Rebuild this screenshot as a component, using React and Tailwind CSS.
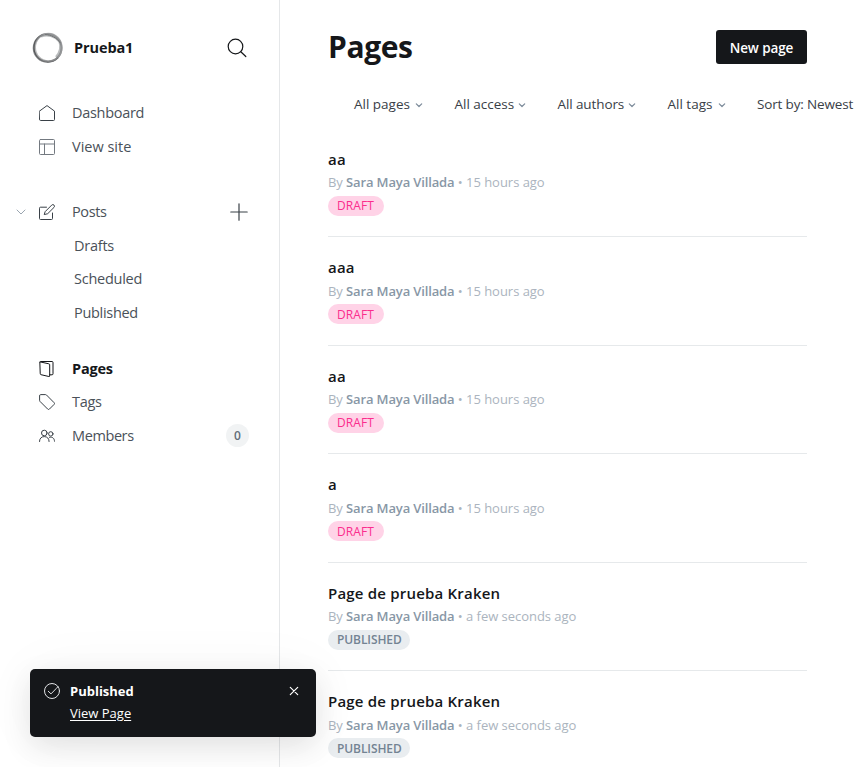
import React from 'react';

const stroke = { fill: 'none', stroke: 'currentColor', strokeLinecap: 'round', strokeLinejoin: 'round' };

function Icon({ size = 16, box = 16, width = 1, className = '', children }) {
  return (
    <svg width={size} height={size} viewBox={`0 0 ${box} ${box}`} {...stroke} strokeWidth={width} className={`shrink-0 ${className}`}>
      {children}
    </svg>
  );
}

const icons = {
  home: <path d="M.5 6.1 8 .6l7.500 5.500v8.400a1 1 0 0 1-1 1h-13a1 1 0 0 1-1-1z" />,
  site: (
    <g stroke="#737980">
      <rect x=".5" y=".5" width="15" height="15" rx="1" />
      <path d="M.5 5h15M5.500 5v10.500" />
    </g>
  ),
  edit: (
    <>
      <path d="M7.500 3.200H1.500a1 1 0 0 0-1 1v10.300a1 1 0 0 0 1 1h11a1 1 0 0 0 1-1V9" />
      <path d="m6.400 7.400 6.300-6.300a1.600 1.600 0 0 1 2.300 2.300L8.700 9.700l-3.100.8z" />
    </>
  ),
  pages: (
    <>
      <path d="M1.200.9 9.800 2.800a1 1 0 0 1 .9 1V15a.6.6 0 0 1-.8.5L2 13.700a1 1 0 0 1-.8-1z" />
      <path d="M1.200.9Q1.400.5 2 .5h11a1 1 0 0 1 1 1v11.300a1 1 0 0 1-1 1h-2.300" />
    </>
  ),
  tag: <path d="M.6 1.600a1 1 0 0 1 1-1h5a1.200 1.200 0 0 1 .8.3l7.700 7.800a1.200 1.200 0 0 1 0 1.700l-4.700 4.700a1.200 1.200 0 0 1-1.700 0L.9 7.300a1.200 1.200 0 0 1-.3-.8z" />,
  members: (
    <>
      <circle cx="5.300" cy="5" r="2.800" />
      <path d="M.5 13.500c0-3 1.800-4.900 4.800-4.900s4.800 1.900 4.800 4.900" />
      <circle cx="11.800" cy="5.900" r="2.200" />
      <path d="M10.500 9.300c2.900-.8 5 1 5 3.900" />
    </>
  ),
};

function NavItem({ icon, label, labelClass = '', active, chevron, children }) {
  return (
    <li className={`flex h-[33.5px] items-center ${active ? 'font-bold text-[#15171a]' : 'text-[#394047]'}`}>
      <span className="flex w-[39px] justify-center pr-[2px] pl-[5px] text-[#9aa5b0]">
        {chevron && (
          <Icon size={10} box={10}>
            <path d="m1 3 4 4 4-4" />
          </Icon>
        )}
      </span>
      <Icon>{icons[icon]}</Icon>
      <span className={`ml-[17px] ${labelClass}`}>{label}</span>
      {children}
    </li>
  );
}

function SubItem({ label, className }) {
  return (
    <li className="flex h-[33.5px] items-center pl-[74px] text-[#4a5159]">
      <span className={className}>{label}</span>
    </li>
  );
}

function Logo() {
  return (
    <svg width="32" height="32" viewBox="0 0 32 32" fill="none" className="ml-[32px] shrink-0">
      <circle cx="15.600" cy="16" r="13.900" stroke="#858789" strokeWidth="2" />
      <path d="M11 2.800C4 5.500 1 12 2.600 19.500 4.500 26 10 29.600 16.500 29.500c4 0 7-1.500 9.500-4" stroke="#505254" strokeWidth="1.400" />
      <ellipse cx="16.500" cy="15.400" rx="13.300" ry="13.800" stroke="#9b9d9e" strokeWidth="1.600" opacity=".7" />
      <path d="M9 4.500C15 1.500 23.500 4 27.500 9.500c2 4.500 1 11-3.500 15.500" stroke="#8b8d8f" strokeWidth="2.400" opacity=".6" />
      <path d="M13 2.600c6 .2 12 3.200 15.500 8.600" stroke="#6f7173" strokeWidth="1" />
    </svg>
  );
}

function Sidebar() {
  return (
    <nav className="flex w-[280px] shrink-0 flex-col border-r border-[#e5e7e9] text-[14.5px] leading-5">
      <header className="mt-[32px] flex h-[32px] items-center">
        <Logo />
        <span className="ml-[10px] font-bold tracking-[-0.1px] text-[#15171a]">Prueba1</span>
        <Icon size={20} box={20} width={1.200} className="mr-[32px] ml-auto text-[#15171a]">
          <circle cx="8.500" cy="8.500" r="7.300" />
          <path d="m13.800 13.800 5 4.700" />
        </Icon>
      </header>
      <ul className="mt-[32.3px]">
        <NavItem icon="home" label="Dashboard" labelClass="tracking-[-0.3px] text-[#4a5159]" />
        <NavItem icon="site" label="View site" labelClass="text-[#4a5159]" />
      </ul>
      <ul className="mt-[32px]">
        <NavItem icon="edit" label="Posts" labelClass="tracking-[-0.4px] text-[#4a5159]" chevron>
          <Icon size={18} box={18} width={1.200} className="mr-[31px] ml-auto">
            <path d="M9 .8v16.400M.8 9h16.400" />
          </Icon>
        </NavItem>
        <SubItem label="Drafts" className="tracking-[-0.25px]" />
        <SubItem label="Scheduled" className="tracking-[-0.25px]" />
        <SubItem label="Published" className="tracking-[-0.3px]" />
      </ul>
      <ul className="mt-[22.500px]">
        <NavItem icon="pages" label="Pages" labelClass="tracking-[-0.2px]" active />
        <NavItem icon="tag" label="Tags" labelClass="tracking-[-0.3px] text-[#4a5159]" />
        <NavItem icon="members" label="Members" labelClass="tracking-[-0.4px] text-[#4a5159]">
          <span className="mr-[30px] ml-auto flex size-[23px] items-center justify-center rounded-full bg-[#f1f3f4] pt-[1px] text-[12px] font-semibold text-[#626d79]">
            0
          </span>
        </NavItem>
      </ul>
    </nav>
  );
}

function Filter({ label, className }) {
  return (
    <div className={`flex shrink-0 items-center justify-between ${className}`}>
      <span>{label}</span>
      <Icon size={8} box={8} width={1.200} className="mt-[1px] text-[#7c8b9a]">
        <path d="m1.300 2.800 2.700 2.700 2.700-2.700" />
      </Icon>
    </div>
  );
}

const rows = [
  { title: 'aa', time: '15 hours ago', draft: true },
  { title: 'aaa', time: '15 hours ago', draft: true },
  { title: 'aa', time: '15 hours ago', draft: true },
  { title: 'a', time: '15 hours ago', draft: true },
  { title: 'Page de prueba Kraken', time: 'a few seconds ago', draft: false },
  { title: 'Page de prueba Kraken', time: 'a few seconds ago', draft: false },
];

function PageRow({ title, time, draft }) {
  return (
    <li className="h-[108.5px] border-b border-[#e6e9eb] pt-[19.2px]">
      <h3 className="text-[15px] leading-[22px] font-semibold tracking-[0.2px] text-[#15171a]">{title}</h3>
      <p className="mt-[2.6px] text-[13px] leading-[20px] tracking-[-0.08px] whitespace-nowrap text-[#abb4be]">
        By <span className="font-semibold tracking-[-0.14px] text-[#8897a6]">Sara Maya Villada</span>
        <span className="tracking-[-0.03px]"> • {time}</span>
      </p>
      <span
        className={`mt-[3.5px] flex h-[20px] items-center rounded-full px-[9px] pt-[1px] text-[12px] leading-none ${
          draft ? 'w-[56px] bg-[#ffd3e7] tracking-[0.1px] text-[#fb2d8d]' : 'w-[82px] bg-[#e9edf0] font-semibold tracking-[-0.1px] text-[#738393]'
        }`}
      >
        {draft ? 'DRAFT' : 'PUBLISHED'}
      </span>
    </li>
  );
}

function Toast() {
  return (
    <aside className="absolute top-[669px] left-[30px] flex h-[68px] w-[286px] rounded-[5px] bg-[#15171a] pt-[12px] pl-[14px] text-white shadow-[0_10px_30px_rgba(0,0,0,0.1),0_0_60px_rgba(0,0,0,0.04)]">
      <Icon className="mt-[2px] text-[#e0e2e4]">
        <circle cx="8" cy="8" r="7.500" />
        <path d="m4.300 8.300 2.700 2.600 5.300-5.500 1.700-1.700" />
      </Icon>
      <div className="ml-[10px] text-[13px] leading-[20px]">
        <p className="font-bold">Published</p>
        <p className="mt-[2px] underline underline-offset-2">View Page</p>
      </div>
      <Icon size={10} box={10} width={1.200} className="mt-[5px] mr-[17px] ml-auto">
        <path d="m1.300 1.300 7.400 7.400M8.700 1.300 1.300 8.700" />
      </Icon>
    </aside>
  );
}

export default function App() {
  return (
    <div className="relative flex h-[767px] w-[855px] overflow-hidden bg-white font-['Open_Sans','Noto_Sans',sans-serif]">
      <Sidebar />
      <main className="flex min-w-0 flex-1 flex-col pl-[48px]">
        <header className="mt-[30px] flex h-[34px] items-center justify-between pr-[48px]">
          <h1 className="text-[30px] leading-[34px] font-bold tracking-[-0.4px] text-[#15171a]">Pages</h1>
          <button className="h-[34px] w-[91px] rounded-[3px] bg-[#15171a] pt-[2px] text-[13.5px] font-semibold tracking-[-0.1px] text-white">
            New page
          </button>
        </header>
        <div className="mt-[30px] flex h-[20px] items-center pl-[26px] text-[13.5px] whitespace-nowrap text-[#394047]">
          <Filter label="All pages" className="w-[69px]" />
          <Filter label="All access" className="ml-[31.5px] w-[71.5px]" />
          <Filter label="All authors" className="ml-[31.5px] w-[78.5px] tracking-[-0.1px]" />
          <Filter label="All tags" className="ml-[31.5px] w-[58.5px]" />
          <span className="ml-[31px] tracking-[-0.15px]">Sort by: Newest</span>
        </div>
        <ul className="mt-[14.5px] w-[479px]">
          {rows.map((row, i) => (
            <PageRow key={i} {...row} />
          ))}
        </ul>
      </main>
      <Toast />
    </div>
  );
}
